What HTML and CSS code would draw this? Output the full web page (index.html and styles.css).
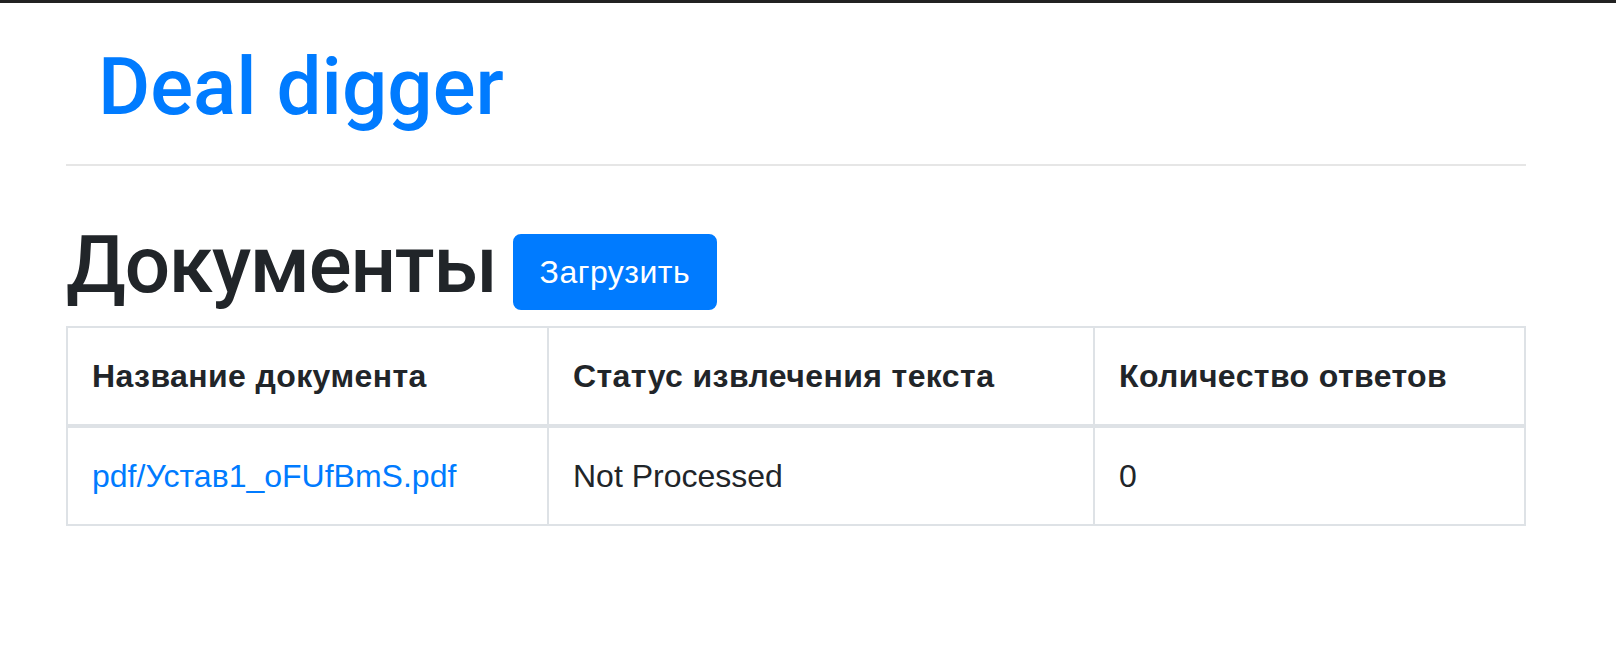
FILE: index.html
```html
<!DOCTYPE html>
<html lang="ru">
<head>
<meta charset="utf-8">
<title>Deal digger</title>
<link rel="stylesheet" href="styles.css">
</head>
<body>
<div class="topbar"></div>
<div class="page">
  <header class="masthead">
    <a class="brand" href="#">Deal digger</a>
  </header>
  <hr class="divider">
  <div class="title-row">
    <h1 class="title">Документы</h1>
    <a class="btn" href="#">Загрузить</a>
  </div>
  <table class="docs">
    <colgroup>
      <col class="c1">
      <col class="c2">
      <col class="c3">
    </colgroup>
    <thead>
      <tr>
        <th>Название документа</th>
        <th>Статус извлечения текста</th>
        <th>Количество ответов</th>
      </tr>
    </thead>
    <tbody>
      <tr>
        <td><a class="doc-link" href="#">pdf/Устав1_oFUfBmS.pdf</a></td>
        <td>Not Processed</td>
        <td>0</td>
      </tr>
    </tbody>
  </table>
</div>
</body>
</html>
```

FILE: styles.css
```css
html, body {
  margin: 0;
  padding: 0;
  background: #fff;
}

body {
  font-family: "Liberation Sans", Arial, Helvetica, sans-serif;
  color: #212529;
}

.topbar {
  height: 3px;
  background: #222;
}

.page {
  margin-left: 66px;
  width: 1460px;
}

.masthead {
  padding: 36px 0 0 32px;
}

.brand {
  display: block;
  font-family: Roboto, "Liberation Sans", Arial, sans-serif;
  font-size: 80px;
  line-height: 96px;
  font-weight: 500;
  color: #007bff;
  text-decoration: none;
}

.divider {
  margin: 29px 0 0;
  border: 0;
  border-top: 2px solid #e6e6e6;
  height: 0;
}

.title-row {
  display: flex;
  align-items: center;
  margin-top: 51px;
}

.title {
  margin: 0 0 13px;
  font-family: Roboto, "Liberation Sans", Arial, sans-serif;
  font-size: 80px;
  line-height: 96px;
  font-weight: 500;
  letter-spacing: -1.2px;
}

.btn {
  margin-left: 16px;
  display: inline-block;
  font-size: 32px;
  line-height: 48px;
  padding: 12px 25px;
  border: 2px solid #007bff;
  border-radius: 8px;
  background: #007bff;
  color: #fff;
  text-decoration: none;
  letter-spacing: 0.5px;
}

.docs {
  width: 1460px;
  border-collapse: collapse;
  table-layout: fixed;
  font-size: 32px;
  line-height: 48px;
}

.c1 { width: 481px; }
.c2 { width: 546px; }

.docs th,
.docs td {
  border: 2px solid #dee2e6;
  padding: 24px 24px;
  text-align: left;
  vertical-align: top;
}

.docs th {
  font-weight: 700;
  border-bottom-width: 4px;
  letter-spacing: 0.4px;
}

.doc-link {
  color: #007bff;
  text-decoration: none;
}
```
